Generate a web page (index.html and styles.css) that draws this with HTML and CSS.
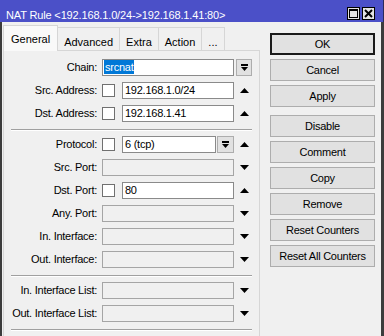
FILE: index.html
```html
<!DOCTYPE html>
<html>
<head>
<meta charset="utf-8">
<link rel="stylesheet" href="styles.css">
</head>
<body>
<div class="window">
  <div class="titlebar">
    <span class="title">NAT Rule &lt;192.168.1.0/24-&gt;192.168.1.41:80&gt;</span>
    <div class="tb-btns">
      <span class="tb-btn"><svg width="11" height="11" viewBox="0 0 11 11"><rect x="1.5" y="1.5" width="8" height="8" fill="none" stroke="#000" stroke-width="1"/><rect x="1" y="1" width="9" height="2" fill="#000"/></svg></span>
      <span class="tb-btn"><svg width="11" height="11" viewBox="0 0 11 11"><path d="M2 2 L9 9 M9 2 L2 9" stroke="#000" stroke-width="2"/></svg></span>
    </div>
  </div>
  <div class="body">
    <div class="tabs-area">
      <div class="tabbar">
        <div class="tab active">General</div>
        <div class="tab">Advanced</div>
        <div class="tab">Extra</div>
        <div class="tab">Action</div>
        <div class="tab">...</div>
      </div>
      <div class="panel">
        <div class="row">
          <label class="lbl">Chain:</label>
          <div class="ctrl"><div class="field on"><span class="sel">srcnat</span></div></div>
          <div class="side"><span class="ddbtn"><svg width="9" height="8" viewBox="0 0 9 8"><rect x="1" y="0" width="7" height="2" fill="#000"/><polygon points="1,3 8,3 4.5,7" fill="#000"/></svg></span></div>
        </div>
        <div class="row">
          <label class="lbl">Src. Address:</label>
          <div class="ctrl"><span class="chk"></span><div class="field on">192.168.1.0/24</div></div>
          <div class="side"><svg class="tri" width="9" height="5" viewBox="0 0 9 5"><polygon points="0,5 4.5,0 9,5" fill="#000"/></svg></div>
        </div>
        <div class="row">
          <label class="lbl">Dst. Address:</label>
          <div class="ctrl"><span class="chk"></span><div class="field on">192.168.1.41</div></div>
          <div class="side"><svg class="tri" width="9" height="5" viewBox="0 0 9 5"><polygon points="0,5 4.5,0 9,5" fill="#000"/></svg></div>
        </div>
        <div class="sep"></div>
        <div class="row">
          <label class="lbl">Protocol:</label>
          <div class="ctrl"><span class="chk"></span><div class="field on">6 (tcp)</div><span class="ddbtn inner"><svg width="9" height="8" viewBox="0 0 9 8"><rect x="1" y="0" width="7" height="2" fill="#000"/><polygon points="1,3 8,3 4.5,7" fill="#000"/></svg></span></div>
          <div class="side"><svg class="tri" width="9" height="5" viewBox="0 0 9 5"><polygon points="0,5 4.5,0 9,5" fill="#000"/></svg></div>
        </div>
        <div class="row">
          <label class="lbl">Src. Port:</label>
          <div class="ctrl"><div class="field"></div></div>
          <div class="side"><svg class="tri" width="9" height="5" viewBox="0 0 9 5"><polygon points="0,0 9,0 4.5,5" fill="#000"/></svg></div>
        </div>
        <div class="row">
          <label class="lbl">Dst. Port:</label>
          <div class="ctrl"><span class="chk"></span><div class="field on">80</div></div>
          <div class="side"><svg class="tri" width="9" height="5" viewBox="0 0 9 5"><polygon points="0,5 4.5,0 9,5" fill="#000"/></svg></div>
        </div>
        <div class="row">
          <label class="lbl">Any. Port:</label>
          <div class="ctrl"><div class="field"></div></div>
          <div class="side"><svg class="tri" width="9" height="5" viewBox="0 0 9 5"><polygon points="0,0 9,0 4.5,5" fill="#000"/></svg></div>
        </div>
        <div class="row">
          <label class="lbl">In. Interface:</label>
          <div class="ctrl"><div class="field"></div></div>
          <div class="side"><svg class="tri" width="9" height="5" viewBox="0 0 9 5"><polygon points="0,0 9,0 4.5,5" fill="#000"/></svg></div>
        </div>
        <div class="row">
          <label class="lbl">Out. Interface:</label>
          <div class="ctrl"><div class="field"></div></div>
          <div class="side"><svg class="tri" width="9" height="5" viewBox="0 0 9 5"><polygon points="0,0 9,0 4.5,5" fill="#000"/></svg></div>
        </div>
        <div class="sep"></div>
        <div class="row">
          <label class="lbl">In. Interface List:</label>
          <div class="ctrl"><div class="field"></div></div>
          <div class="side"><svg class="tri" width="9" height="5" viewBox="0 0 9 5"><polygon points="0,0 9,0 4.5,5" fill="#000"/></svg></div>
        </div>
        <div class="row">
          <label class="lbl">Out. Interface List:</label>
          <div class="ctrl"><div class="field"></div></div>
          <div class="side"><svg class="tri" width="9" height="5" viewBox="0 0 9 5"><polygon points="0,0 9,0 4.5,5" fill="#000"/></svg></div>
        </div>
        <div class="sep"></div>
      </div>
    </div>
    <div class="buttons">
      <div class="btn default">OK</div>
      <div class="btn">Cancel</div>
      <div class="btn">Apply</div>
      <div class="btn gap">Disable</div>
      <div class="btn">Comment</div>
      <div class="btn">Copy</div>
      <div class="btn">Remove</div>
      <div class="btn">Reset Counters</div>
      <div class="btn">Reset All Counters</div>
    </div>
  </div>
</div>
</body>
</html>
```

FILE: styles.css
```css
html, body {
  margin: 0;
  padding: 0;
  background: #f0f0f0;
}
body {
  font-family: "Liberation Sans", Arial, sans-serif;
  font-size: 11px;
  line-height: 13px;
  letter-spacing: -0.25px;
  color: #000;
}
.window {
  width: 384px;
  height: 336px;
  overflow: hidden;
  display: flex;
  flex-direction: column;
  background: #f0f0f0;
}
.titlebar {
  height: 22px;
  flex: none;
  background: #4b50c8;
  color: #fff;
  display: flex;
  align-items: flex-start;
  padding: 0 8px 0 6px;
  box-sizing: border-box;
  border-right: 1px solid #2a2a5a;
}
.title {
  margin-top: 9px;
  flex: 1;
  white-space: nowrap;
  letter-spacing: -0.15px;
}
.tb-btns {
  display: flex;
  gap: 2px;
  margin-top: 7px;
}
.tb-btn {
  width: 13px;
  height: 13px;
  box-sizing: border-box;
  border: 1px solid #000;
  background: #e3e3e3;
  display: flex;
  align-items: center;
  justify-content: center;
}
.tb-btn svg { display: block; }
.body {
  flex: 1;
  display: flex;
  align-items: stretch;
  border-left: 2px solid #3c3c3c;
  border-right: 3px solid #3c3c3c;
  padding: 3px 0 0 1px;
  min-height: 0;
}
.tabs-area {
  width: 257px;
  display: flex;
  flex-direction: column;
}
.tabbar {
  height: 25px;
  display: flex;
  align-items: flex-end;
  position: relative;
  z-index: 1;
}
.tab {
  height: 23px;
  box-sizing: border-box;
  border: 1px solid #d6d6d6;
  border-bottom: none;
  padding: 8px 6px 0;
  margin-left: -1px;
  background: #f0f0f0;
  white-space: nowrap;
  letter-spacing: 0;
}
.tab:first-child { margin-left: 0; }
.tab.active {
  height: 26px;
  padding: 7px 7px 0;
  margin-bottom: -1px;
  background: #f9f9f9;
  position: relative;
}
.panel {
  flex: 1;
  border: 1px solid #d6d6d6;
  border-bottom: none;
  padding-top: 5px;
  background: #f0f0f0;
}
.row {
  height: 23px;
  display: flex;
  align-items: center;
}
.lbl {
  width: 93px;
  margin-right: 5px;
  text-align: right;
  white-space: nowrap;
}
.ctrl {
  width: 132px;
  height: 17px;
  display: flex;
  align-items: center;
}
.chk {
  width: 13px;
  height: 13px;
  box-sizing: border-box;
  border: 1px solid #707070;
  background: #fff;
  margin-right: 7px;
  flex: none;
}
.field {
  flex: 1;
  height: 17px;
  box-sizing: border-box;
  border: 1px solid #a5a5a5;
  background: #f0f0f0;
  padding: 1px 2px 0 2px;
  white-space: nowrap;
  overflow: hidden;
}
.field.on {
  border-color: #8a8a8a;
  background: #fff;
  color: #000;
}
.sel {
  display: inline-block;
  background: #0078d7;
  color: #fff;
  line-height: 14px;
  margin-left: -1px;
  margin-top: -1px;
  padding: 0 1px;
}
.side {
  width: 16px;
  margin-left: 2px;
  height: 17px;
  display: flex;
  align-items: center;
  justify-content: center;
}
.tri { display: block; }
.ddbtn {
  width: 16px;
  height: 17px;
  box-sizing: border-box;
  border: 1px solid #adadad;
  background: #e1e1e1;
  display: flex;
  align-items: center;
  justify-content: center;
  flex: none;
}
.ddbtn svg { display: block; }
.ddbtn.inner {
  width: 17px;
  margin-left: 1px;
}
.sep {
  margin: 4px 7px 2px;
  border-top: 1px solid #a0a0a0;
  border-bottom: 1px solid #ffffff;
}
.buttons {
  width: 105px;
  margin-left: 10px;
  padding-top: 8px;
  display: flex;
  flex-direction: column;
  gap: 4px;
}
.btn {
  height: 22px;
  box-sizing: border-box;
  border: 1px solid #adadad;
  background: #e1e1e1;
  display: flex;
  align-items: center;
  justify-content: center;
  white-space: nowrap;
}
.btn.default {
  border: 1px solid #1a1a1a;
  box-shadow: inset 0 0 0 1px #1a1a1a;
}
.btn.gap { margin-top: 4px; }
```
